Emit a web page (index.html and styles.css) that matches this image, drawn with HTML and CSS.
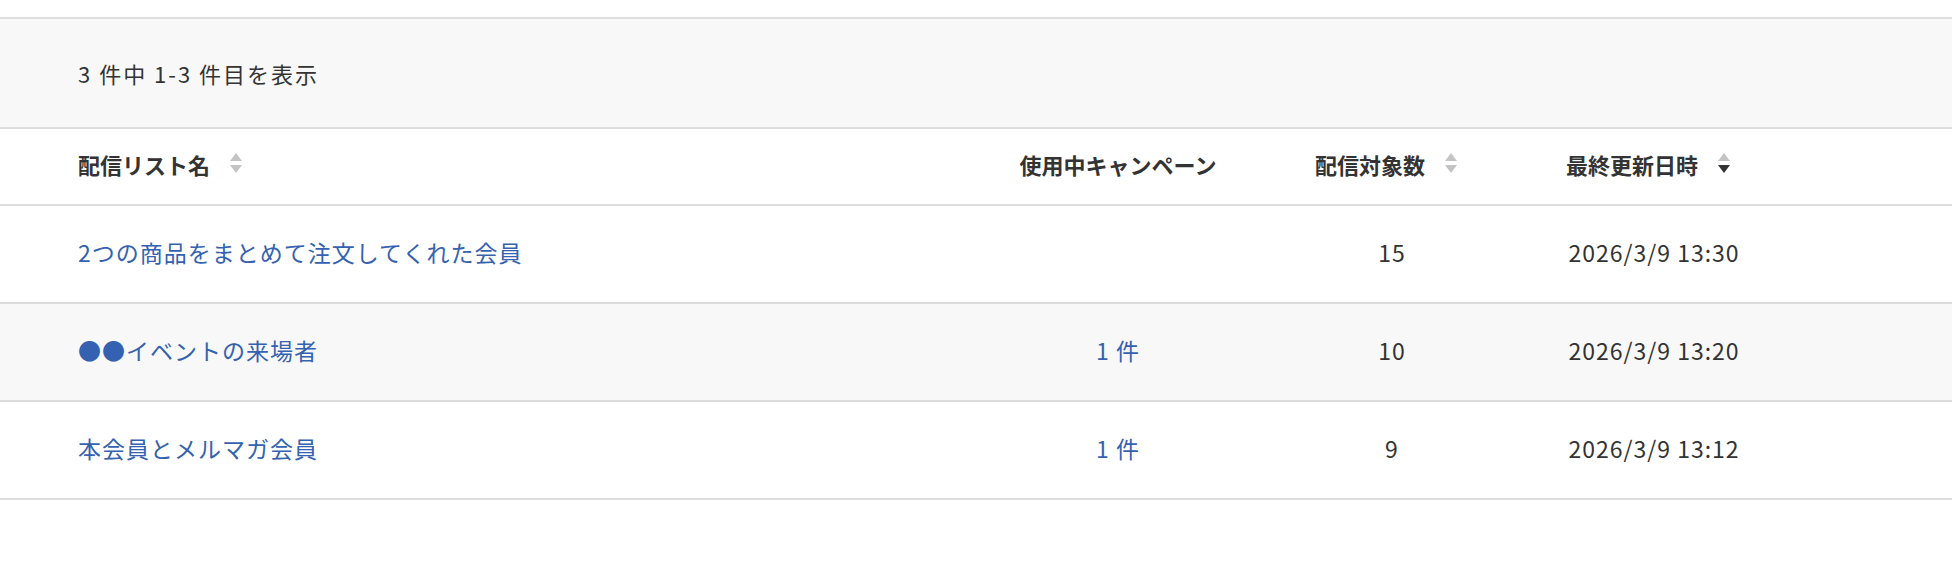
FILE: index.html
```html
<!DOCTYPE html>
<html lang="ja">
<head>
<meta charset="utf-8">
<title>配信リスト</title>
<link rel="stylesheet" href="styles.css">
</head>
<body>
<div class="list">
  <div class="summary">3 件中 1-3 件目を表示</div>
  <div class="table">
    <div class="row head">
      <div class="cell name"><span>配信リスト名</span><svg class="sort" width="12" height="21" viewBox="0 0 12 21"><path d="M6 0 L12 8 L0 8 Z" fill="#c4c4c4"/><path d="M0 12 L12 12 L6 20 Z" fill="#c4c4c4"/></svg></div>
      <div class="cell center"><span>使用中キャンペーン</span></div>
      <div class="cell center sortable"><span>配信対象数</span><svg class="sort" width="12" height="21" viewBox="0 0 12 21"><path d="M6 0 L12 8 L0 8 Z" fill="#c4c4c4"/><path d="M0 12 L12 12 L6 20 Z" fill="#c4c4c4"/></svg></div>
      <div class="cell center sortable"><span>最終更新日時</span><svg class="sort" width="12" height="21" viewBox="0 0 12 21"><path d="M6 0 L12 8 L0 8 Z" fill="#c4c4c4"/><path d="M0 12 L12 12 L6 20 Z" fill="#333333"/></svg></div>
    </div>
    <div class="row">
      <div class="cell name"><a class="link" href="#">2つの商品をまとめて注文してくれた会員</a></div>
      <div class="cell center"></div>
      <div class="cell center">15</div>
      <div class="cell center">2026/3/9 13:30</div>
    </div>
    <div class="row alt">
      <div class="cell name"><a class="link" href="#">●●イベントの来場者</a></div>
      <div class="cell center"><a class="link" href="#">1 件</a></div>
      <div class="cell center">10</div>
      <div class="cell center">2026/3/9 13:20</div>
    </div>
    <div class="row">
      <div class="cell name"><a class="link" href="#">本会員とメルマガ会員</a></div>
      <div class="cell center"><a class="link" href="#">1 件</a></div>
      <div class="cell center">9</div>
      <div class="cell center">2026/3/9 13:12</div>
    </div>
  </div>
</div>
</body>
</html>
```

FILE: styles.css
```css
html, body {
  margin: 0;
  padding: 0;
  background: #ffffff;
}

body {
  font-family: "Noto Sans CJK JP", "Noto Sans", sans-serif;
  color: #333333;
}

.list {
  margin-top: 17px;
  border-top: 2px solid #dddddd;
}

.summary {
  background: #f8f8f8;
  height: 108px;
  box-sizing: content-box;
  padding-bottom: 0;
  display: flex;
  align-items: center;
  padding-left: 78px;
  font-size: 22px;
  letter-spacing: 2px;
  color: #333333;
  border-bottom: 2px solid #dddddd;
}

.row {
  display: grid;
  grid-template-columns: 903px 274px 274px 250px;
  padding-left: 78px;
  height: 96px;
  box-sizing: content-box;
  border-bottom: 2px solid #dddddd;
  font-size: 23px;
  letter-spacing: 1px;
}

.row > .cell {
  padding-bottom: 4px;
}

.row.head {
  height: 75px;
  font-size: 22px;
  font-weight: bold;
  letter-spacing: 0;
}

.row.head > .cell {
  padding-bottom: 6px;
}

.row.alt {
  background: #f8f8f8;
}

.cell {
  display: flex;
  align-items: center;
  white-space: nowrap;
}

.cell.center {
  justify-content: center;
}

.row.head > .cell.sortable {
  padding-right: 12px;
}

.sort {
  margin-left: 20px;
  flex: none;
}

.link {
  color: #3562b0;
  text-decoration: none;
}
```
